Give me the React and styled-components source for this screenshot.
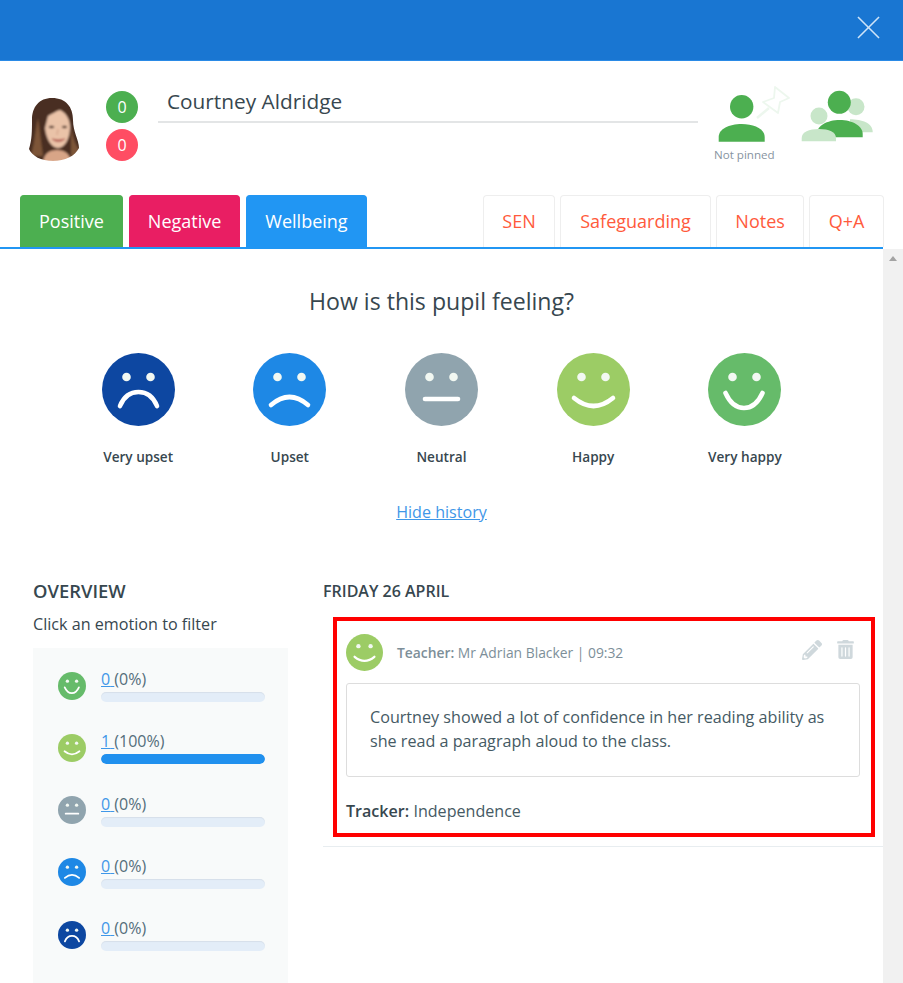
import React from 'react'
import styled, { createGlobalStyle } from 'styled-components'
import { FaPencilAlt, FaTrashAlt } from 'react-icons/fa'

const GlobalStyle = createGlobalStyle`
  html, body {
    margin: 0;
    padding: 0;
    background: #fff;
  }
  * {
    box-sizing: border-box;
  }
`

const Page = styled.div`
  width: 903px;
  height: 983px;
  overflow: hidden;
  font-family: "Open Sans", "Noto Sans", sans-serif;
  color: #37474f;
  display: flex;
  flex-direction: column;
`

const TopBar = styled.header`
  height: 61px;
  flex: none;
  background: #1976d2;
  border-bottom: 1px solid #2a8ae6;
  display: flex;
  justify-content: flex-end;
  align-items: center;
  padding: 0 23px 6px 0;
`

const ProfileRow = styled.section`
  height: 134px;
  flex: none;
  display: flex;
  align-items: flex-start;
  padding-left: 23px;
`

const Photo = styled.div`
  width: 62px;
  height: 66px;
  margin-top: 35px;
  flex: none;
`

const Badges = styled.div`
  display: flex;
  flex-direction: column;
  gap: 6px;
  margin: 30px 0 0 21px;
`

const Badge = styled.div`
  width: 32px;
  height: 32px;
  border-radius: 50%;
  background: ${p => p.$bg};
  color: #fff;
  font-size: 16px;
  display: flex;
  align-items: center;
  justify-content: center;
`

const NameField = styled.div`
  width: 540px;
  height: 32px;
  margin: 30px 0 0 20px;
  padding-left: 9px;
  border-bottom: 2px solid #e3e5e6;
  font-size: 20.8px;
  line-height: 21px;
`

const PinBlock = styled.div`
  width: 78px;
  margin: 24px 0 0 16px;
  display: flex;
  flex-direction: column;
`

const PinLabel = styled.span`
  font-size: 11.6px;
  color: #88949f;
  line-height: 14px;
  margin-top: 3px;
  text-align: center;
  padding-right: 18px;
  white-space: nowrap;
`

const GroupBlock = styled.div`
  margin: 27px 0 0 8px;
`

const TabRow = styled.nav`
  height: 54px;
  flex: none;
  width: 883px;
  padding: 0 0 0 20px;
  display: flex;
  justify-content: space-between;
  border-bottom: 2px solid #2196f3;
`

const TabGroup = styled.div`
  display: flex;
  gap: ${p => p.$gap}px;
  margin-right: ${p => p.$over || 0}px;
`

const Tab = styled.div`
  height: 52px;
  padding: 0 ${p => p.$pad}px 2px;
  background: ${p => p.$bg || '#fff'};
  color: ${p => (p.$bg ? '#fff' : '#ff5a3c')};
  border: 1px solid ${p => (p.$bg ? p.$bg : '#eeeeee')};
  border-bottom: none;
  border-radius: 4px 4px 0 0;
  font-size: 18px;
  display: flex;
  align-items: center;
  justify-content: center;
`

const Body = styled.div`
  flex: 1;
  display: flex;
  min-height: 0;
`

const Content = styled.main`
  width: 883px;
  flex: none;
`

const Scrollbar = styled.div`
  width: 20px;
  flex: none;
  background: #f1f1f1;
  display: flex;
  justify-content: center;
  padding-top: 7px;
`

const ScrollArrow = styled.div`
  width: 0;
  height: 0;
  border-left: 4px solid transparent;
  border-right: 4px solid transparent;
  border-bottom: 5px solid #a3a3a3;
`

const Question = styled.h2`
  margin: 36px 0 0;
  font-size: 23.1px;
  font-weight: 400;
  line-height: 32px;
  text-align: center;
`

const EmotionRow = styled.div`
  margin-top: 36px;
  display: flex;
  justify-content: center;
`

const Emotion = styled.div`
  width: 151.7px;
  display: flex;
  flex-direction: column;
  align-items: center;
`

const EmotionLabel = styled.span`
  margin-top: 21px;
  font-size: 13.6px;
  font-weight: 600;
  line-height: 20px;
`

const HistoryLink = styled.a`
  display: block;
  margin-top: 34px;
  text-align: center;
  font-size: 16.1px;
  line-height: 22px;
  color: #3f97e8;
  text-decoration: underline;
`

const Columns = styled.div`
  margin-top: 56px;
  padding-left: 33px;
  display: flex;
  gap: 35px;
`

const OverviewColumn = styled.div`
  width: 255px;
  flex: none;
`

const Heading = styled.h3`
  margin: 0;
  font-size: ${p => p.$size}px;
  font-weight: 600;
  line-height: 24px;
`

const Hint = styled.p`
  margin: 10px 0 0;
  font-size: 16.15px;
  line-height: 22px;
`

const Panel = styled.div`
  margin-top: 13px;
  height: 340px;
  background: #f8fafa;
  padding: 21px 0 0 25px;
  display: flex;
  flex-direction: column;
  gap: 29.3px;
`

const StatRow = styled.div`
  display: flex;
  align-items: center;
  gap: 15px;
`

const StatInfo = styled.div`
  width: 164px;
  display: flex;
  flex-direction: column;
  gap: 3px;
`

const StatText = styled.div`
  font-size: 16px;
  line-height: 20px;
  color: #546e7a;
  white-space: pre;
`

const StatCount = styled.a`
  color: #3f97e8;
  text-decoration: underline;
`

const Track = styled.div`
  height: 10px;
  border-radius: 5px;
  background: #e3edf8;
  box-shadow: inset 0 1px 1px rgba(0, 0, 0, 0.06);
  overflow: hidden;
`

const Fill = styled.div`
  height: 100%;
  border-radius: 5px;
  background: #2090ee;
`

const HistoryColumn = styled.div`
  flex: 1;
  min-width: 0;
`

const EntryWrap = styled.div`
  margin-top: 14px;
  padding: 0 8px 9px 10px;
  border-bottom: 1px solid #e8edf0;
`

const Entry = styled.article`
  height: 220px;
  border: 4px solid #ff0000;
  padding: 13px 11px 0 9px;
`

const EntryHead = styled.div`
  height: 37px;
  display: flex;
  align-items: center;
  gap: 14px;
`

const EntryMeta = styled.span`
  flex: 1;
  font-size: 13.85px;
  color: #7d8f99;
  strong {
    font-weight: 600;
  }
`

const EntryActions = styled.div`
  display: flex;
  align-items: center;
  gap: 14px;
  padding: 0 5px 6px 0;
  color: #cfd8dc;
`

const NoteBox = styled.div`
  margin-top: 12px;
  height: 94px;
  border: 1px solid #dddddd;
  border-radius: 3px;
  padding: 21px 23px 0;
  font-size: 16.15px;
  line-height: 24px;
  color: #455a64;
`

const TrackerLine = styled.p`
  margin: 22px 0 0;
  font-size: 16.1px;
  line-height: 24px;
  color: #455a64;
  strong {
    font-weight: 600;
    color: #37474f;
  }
`

const moods = {
  veryHappy: { bg: '#66bb6a', label: 'Very happy', mouth: 'M17.5 40 C22 50 29 55 36 55 C43 55 50 50 54.5 40' },
  happy: { bg: '#9ccc65', label: 'Happy', mouth: 'M17 45 Q36.5 61 56 45' },
  neutral: { bg: '#90a4ae', label: 'Neutral', mouth: 'M20 46 H53' },
  upset: { bg: '#1e88e5', label: 'Upset', mouth: 'M18 52 Q36.5 36 55 52' },
  veryUpset: { bg: '#0d47a1', label: 'Very upset', mouth: 'M18 53 C22 43 29 39 36.5 39 C44 39 51 43 55 53' },
}

function Face({ mood, size }) {
  const m = moods[mood]
  return (
    <svg width={size} height={size} viewBox="0 0 73 73" style={{ flex: 'none', display: 'block' }}>
      <circle cx="36.5" cy="36.5" r="36.5" fill={m.bg} />
      <circle cx="24.5" cy="24" r="4.3" fill="#f2f8f2" />
      <circle cx="48.5" cy="24" r="4.3" fill="#f2f8f2" />
      <path d={m.mouth} fill="none" stroke="#fff" strokeWidth={4.6} strokeLinecap="round" />
    </svg>
  )
}

function PupilPhoto() {
  return (
    <svg width="62" height="66" viewBox="0 0 62 66">
      <defs>
        <filter id="soft" x="-10%" y="-10%" width="120%" height="120%">
          <feGaussianBlur stdDeviation="0.9" />
        </filter>
        <clipPath id="photoClip">
          <path d="M29 2 C43 2 50 11 50 24 C50 36 56 44 56 52 C52 60 42 65 30 65 C18 65 9 60 6 53 C9 44 9 34 9 24 C9 11 16 2 29 2 Z" />
        </clipPath>
      </defs>
      <g clipPath="url(#photoClip)">
        <g filter="url(#soft)">
          <rect width="62" height="66" fill="#4a2d22" />
          <path d="M8 60 C12 44 13 30 15 22 L20 60 Z" fill="#7d5539" />
          <path d="M48 30 C50 44 53 50 58 56 L48 62 Z" fill="#7d5539" />
          <path d="M20 66 C21 58 26 54 34 54 C42 54 47 58 48 66 Z" fill="#d8a587" />
          <path d="M25 20 C29 18 33 15 37 14 C43 17 47 23 47 31 C47 42 42 52 35 52 C28 52 23 42 22 32 Z" fill="#eac3a8" />
          <ellipse cx="28.5" cy="31" rx="2.8" ry="1.3" fill="#4d3226" />
          <ellipse cx="41.5" cy="31" rx="2.6" ry="1.3" fill="#4d3226" />
          <path d="M29 43 Q35 48 42 43 Q35 45 29 43 Z" fill="#b65f55" stroke="#b65f55" strokeWidth="1" />
          <path d="M35 33 L34 39" fill="none" stroke="#d3a288" strokeWidth="1.2" />
        </g>
      </g>
    </svg>
  )
}

const stats = [
  { mood: 'veryHappy', count: 0, pct: 0 },
  { mood: 'happy', count: 1, pct: 100 },
  { mood: 'neutral', count: 0, pct: 0 },
  { mood: 'upset', count: 0, pct: 0 },
  { mood: 'veryUpset', count: 0, pct: 0 },
]

const faceOrder = ['veryUpset', 'upset', 'neutral', 'happy', 'veryHappy']

export default function App() {
  return (
    <Page>
      <GlobalStyle />
      <TopBar>
        <svg width="23" height="23" viewBox="0 0 24 24">
          <path d="M1 1 L23 23 M23 1 L1 23" stroke="#cfe4f8" strokeWidth="1.6" fill="none" />
        </svg>
      </TopBar>

      <ProfileRow>
        <Photo><PupilPhoto /></Photo>
        <Badges>
          <Badge $bg="#4caf50">0</Badge>
          <Badge $bg="#ff4d63">0</Badge>
        </Badges>
        <NameField>Courtney Aldridge</NameField>
        <PinBlock>
          <svg width="78" height="60" viewBox="0 0 78 60">
            <circle cx="27.7" cy="21.7" r="11.7" fill="#4caf50" />
            <path d="M4.7 56.7 V52 C4.7 44 15 39 27.7 39 S50.7 44 50.7 52 V56.7 Z" fill="#4caf50" />
            <path d="M61 2 L75 13 L66 17 L64 28 L49 17 L60 13 Z" fill="#fff" stroke="#edf7ee" strokeWidth="1.8" strokeLinejoin="round" />
            <path d="M55 23 L43 33" stroke="#edf7ee" strokeWidth="2.6" />
          </svg>
          <PinLabel>Not pinned</PinLabel>
        </PinBlock>
        <GroupBlock>
          <svg width="75" height="56" viewBox="0 0 75 56">
            <circle cx="56" cy="18.7" r="8.5" fill="#c8e6c9" />
            <path d="M50 44.3 V31.3 C62 31.3 72.7 35 72.7 44.3 Z" fill="#c8e6c9" />
            <circle cx="39.3" cy="14.3" r="11.5" fill="#4caf50" />
            <path d="M16.7 49.3 V46 C16.7 38 27 32 39.7 32 S62.7 38 62.7 46 V49.3 Z" fill="#4caf50" />
            <circle cx="19" cy="28" r="8.5" fill="#c8e6c9" />
            <path d="M1.7 53.3 V50 C1.7 44 9 41 19 41 S36 44 36 50 V53.3 Z" fill="#c8e6c9" />
          </svg>
        </GroupBlock>
      </ProfileRow>

      <TabRow>
        <TabGroup $gap={6}>
          <Tab $pad={18} $bg="#4caf50">Positive</Tab>
          <Tab $pad={18} $bg="#e91e63">Negative</Tab>
          <Tab $pad={18} $bg="#2196f3">Wellbeing</Tab>
        </TabGroup>
        <TabGroup $gap={5} $over={-1}>
          <Tab $pad={18.5}>SEN</Tab>
          <Tab $pad={19}>Safeguarding</Tab>
          <Tab $pad={18.5}>Notes</Tab>
          <Tab $pad={18.5}>Q+A</Tab>
        </TabGroup>
      </TabRow>

      <Body>
        <Content>
          <Question>How is this pupil feeling?</Question>
          <EmotionRow>
            {faceOrder.map(key => (
              <Emotion key={key}>
                <Face mood={key} size={73} />
                <EmotionLabel>{moods[key].label}</EmotionLabel>
              </Emotion>
            ))}
          </EmotionRow>
          <HistoryLink>Hide history</HistoryLink>

          <Columns>
            <OverviewColumn>
              <Heading $size={18.4}>OVERVIEW</Heading>
              <Hint>Click an emotion to filter</Hint>
              <Panel>
                {stats.map(s => (
                  <StatRow key={s.mood}>
                    <Face mood={s.mood} size={28} />
                    <StatInfo>
                      <StatText><StatCount>{s.count} </StatCount>({s.pct}%)</StatText>
                      <Track><Fill style={{ width: `${s.pct}%` }} /></Track>
                    </StatInfo>
                  </StatRow>
                ))}
              </Panel>
            </OverviewColumn>

            <HistoryColumn>
              <Heading $size={16}>FRIDAY 26 APRIL</Heading>
              <EntryWrap>
                <Entry>
                  <EntryHead>
                    <Face mood="happy" size={37} />
                    <EntryMeta><strong>Teacher:</strong> Mr Adrian Blacker | 09:32</EntryMeta>
                    <EntryActions>
                      <FaPencilAlt size={20} />
                      <FaTrashAlt size={19} />
                    </EntryActions>
                  </EntryHead>
                  <NoteBox>Courtney showed a lot of confidence in her reading ability as she read a paragraph aloud to the class.</NoteBox>
                  <TrackerLine><strong>Tracker:</strong> Independence</TrackerLine>
                </Entry>
              </EntryWrap>
            </HistoryColumn>
          </Columns>
        </Content>
        <Scrollbar><ScrollArrow /></Scrollbar>
      </Body>
    </Page>
  )
}
